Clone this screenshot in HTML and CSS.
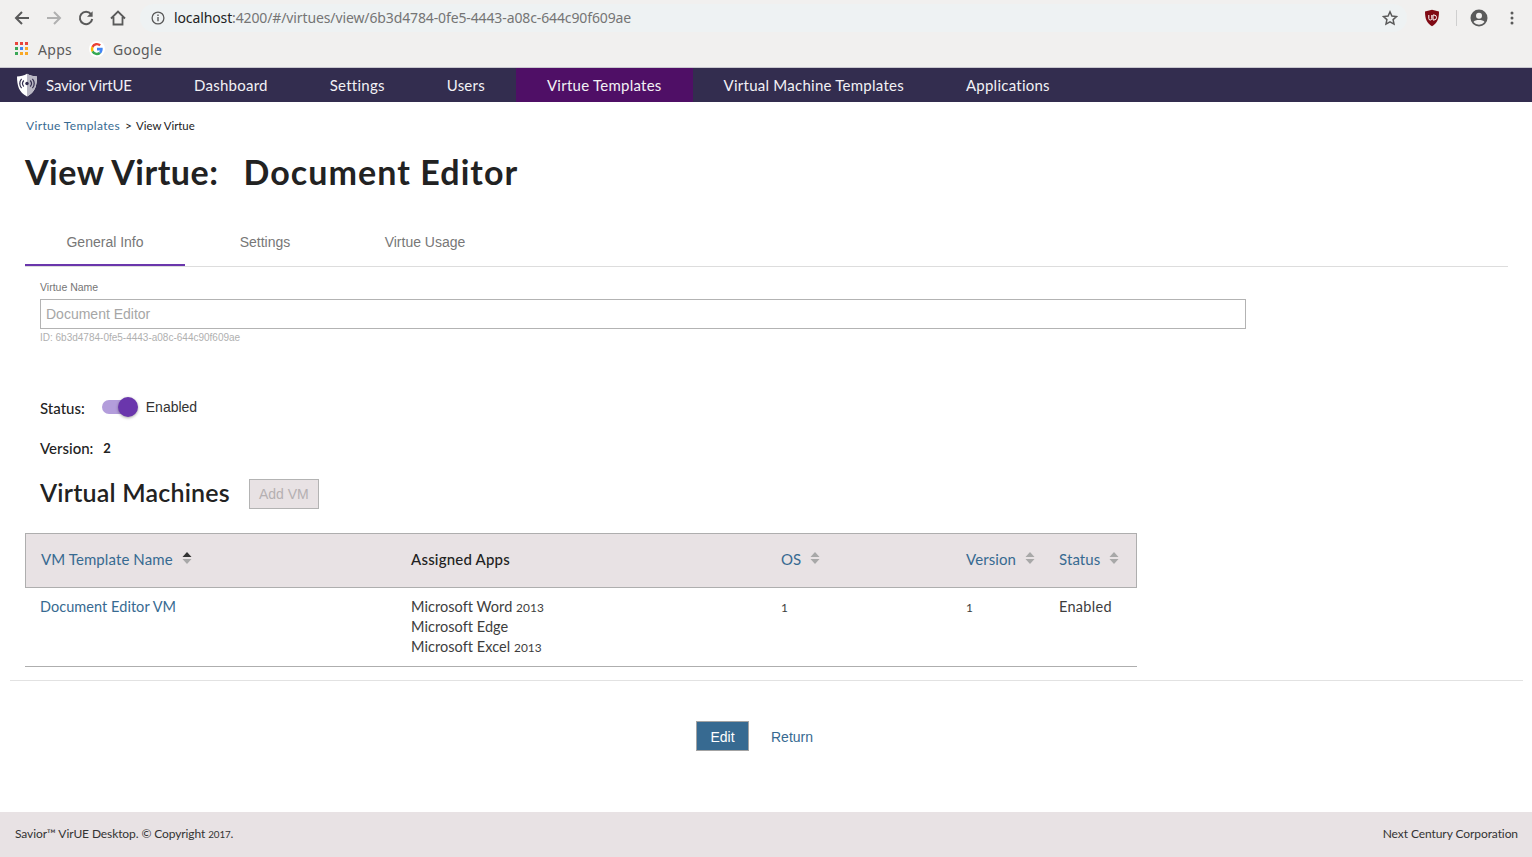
FILE: index.html
```html
<!DOCTYPE html>
<html lang="en">
<head>
<meta charset="utf-8">
<title>Savior VirtUE</title>
<link rel="stylesheet" href="styles.css">
</head>
<body>
<div class="browser">
  <div class="toolbar">
    <svg class="tb-icon" viewBox="0 0 16 16"><path d="M15 8H2.5M8 2 2 8l6 6" fill="none" stroke="#5a5a5a" stroke-width="2"/></svg>
    <svg class="tb-icon" viewBox="0 0 16 16"><path d="M1 8h12.5M8 2l6 6-6 6" fill="none" stroke="#b0b0b0" stroke-width="2"/></svg>
    <svg class="tb-icon" viewBox="0 0 16 16"><path d="M13 4.2A6.2 6.2 0 1 0 14.2 9" fill="none" stroke="#5a5a5a" stroke-width="2"/><path d="M14.6 1.2v5.6H9z" fill="#5a5a5a"/></svg>
    <svg class="tb-icon" viewBox="0 0 16 16"><path d="M1 8.5 8 1.5l7 7M3.5 7v7.5h9V7" fill="none" stroke="#5a5a5a" stroke-width="1.8"/></svg>
    <div class="omnibox">
      <svg class="info" viewBox="0 0 14 14"><circle cx="7" cy="7" r="5.9" fill="none" stroke="#5a5a5a" stroke-width="1.3"/><path d="M7 6v4.2M7 3.6v1.3" stroke="#5a5a5a" stroke-width="1.4"/></svg>
      <span class="url"><span class="host">localhost</span>:4200/#/virtues/view/6b3d4784-0fe5-4443-a08c-644c90f609ae</span>
      <svg class="star" viewBox="0 0 16 16"><path d="m8 1.8 1.9 4.2 4.6.5-3.4 3.1.9 4.5L8 11.8l-4 2.3.9-4.5L1.500 6.500l4.600-.5z" fill="none" stroke="#5a5a5a" stroke-width="1.500"/></svg>
    </div>
    <svg class="ublock" viewBox="0 0 16 18"><path d="M8 .8 15 2.500c0 7-1.500 11.500-7 14.700C2.500 14 1 9.500 1 2.500z" fill="#800a14"/><path d="M4.800 6v3.500a1.500 1.500 0 0 0 3 0V6M9 6v5h1a2.500 2.500 0 0 0 0-5z" fill="none" stroke="#fff" stroke-width="1"/></svg>
    <span class="tb-sep"></span>
    <svg class="avatar" viewBox="0 0 18 18"><circle cx="9" cy="9" r="8.500" fill="#5a5a5a"/><circle cx="9" cy="6.800" r="3" fill="#f1f0ef"/><path d="M3.500 13c1.500-2.600 9.500-2.600 11 0a7 7 0 0 1-11 0z" fill="#f1f0ef"/></svg>
    <svg class="kebab" viewBox="0 0 4 14"><circle cx="2" cy="2" r="1.500" fill="#5a5a5a"/><circle cx="2" cy="7" r="1.500" fill="#5a5a5a"/><circle cx="2" cy="12" r="1.500" fill="#5a5a5a"/></svg>
  </div>
  <div class="bookmarks">
    <span class="bm">
      <svg class="apps" viewBox="0 0 14 14"><g><rect x="0" y="0" width="3" height="3" fill="#e8453c"/><rect x="5" y="0" width="3" height="3" fill="#e8453c"/><rect x="10" y="0" width="3" height="3" fill="#e8453c"/><rect x="0" y="5" width="3" height="3" fill="#3aa757"/><rect x="5" y="5" width="3" height="3" fill="#4285f4"/><rect x="10" y="5" width="3" height="3" fill="#f9a825"/><rect x="0" y="10" width="3" height="3" fill="#3aa757"/><rect x="5" y="10" width="3" height="3" fill="#f9a825"/><rect x="10" y="10" width="3" height="3" fill="#f9a825"/></g></svg>
      Apps
    </span>
    <span class="bm">
      <svg class="g" viewBox="0 0 16 16"><circle cx="8" cy="8" r="8" fill="#fff"/><path d="M13.600 6.800H8v2.600h3a3 3 0 0 1-1.200 1.700l2 1.600c1.200-1.100 1.900-2.700 1.900-4.600z" fill="#4285f4"/><path d="M4.500 9.400 2.500 11A6 6 0 0 0 11.800 12.700L9.800 11.100a3.600 3.600 0 0 1-5.300-1.700z" fill="#34a853"/><path d="M4.500 9.400a3.600 3.600 0 0 1 0-2.600L2.500 5.200a6 6 0 0 0 0 5.800z" fill="#fbbc05"/><path d="M2.500 5.200 4.500 6.800A3.600 3.600 0 0 1 10.300 5.300l1.700-1.700A6 6 0 0 0 2.500 5.200z" fill="#ea4335"/></svg>
      Google
    </span>
  </div>
</div>

<nav class="nav">
  <a class="brand">
    <svg class="shield" viewBox="0 0 22 24"><path d="M11 .8C8 2.800 4.500 3.500 1 3.500c0 9 2 16 10 20 8-4 10-11 10-20-3.500 0-7-.7-10-2.700z" fill="#fff"/><path d="M11 .8v22.700c8-4 10-11 10-20-3.500 0-7-.7-10-2.700z" fill="#b9b7c4"/><circle cx="11" cy="10.500" r="1.700" fill="#332d4f"/><path d="M7.800 7.500a4.500 4.500 0 0 0 0 6M14.200 7.500a4.500 4.500 0 0 1 0 6M5.600 5.800a7 7 0 0 0 0 9.400M16.400 5.800a7 7 0 0 1 0 9.400" fill="none" stroke="#332d4f" stroke-width="1.200"/></svg>
    <span class="brand-name">Savior VirtUE</span>
  </a>
  <a class="nav-item">Dashboard</a>
  <a class="nav-item">Settings</a>
  <a class="nav-item">Users</a>
  <a class="nav-item active">Virtue Templates</a>
  <a class="nav-item">Virtual Machine Templates</a>
  <a class="nav-item">Applications</a>
</nav>

<main class="main">
  <div class="crumbs"><a class="link">Virtue Templates</a><span class="crumb-sep">&gt;</span><span class="crumb-cur">View Virtue</span></div>
  <h1 class="title"><span class="title-a">View Virtue:</span><span class="title-b">Document Editor</span></h1>

  <div class="tabs">
    <div class="tab selected">General Info</div>
    <div class="tab">Settings</div>
    <div class="tab">Virtue Usage</div>
  </div>

  <section class="panel">
    <label class="field-label">Virtue Name</label>
    <div class="input">Document Editor</div>
    <div class="hint">ID: 6b3d4784-0fe5-4443-a08c-644c90f609ae</div>

    <div class="status-row">
      <span class="key">Status:</span>
      <span class="toggle"><span class="track"></span><span class="thumb"></span></span>
      <span class="toggle-text">Enabled</span>
    </div>
    <div class="version-row"><span class="key">Version:</span><span class="version-val">2</span></div>
    <div class="vm-head">
      <h2 class="vm-title">Virtual Machines</h2>
      <button class="add-btn" disabled>Add VM</button>
    </div>
  </section>

  <div class="table">
    <div class="row head">
      <div class="cell c1 link">VM Template Name <svg class="sort" viewBox="0 0 10 12"><path d="M5 0l4.500 5H.5z" fill="#333"/><path d="M5 12 .5 7h9z" fill="#a8a8a8"/></svg></div>
      <div class="cell c2">Assigned Apps</div>
      <div class="cell c3 link">OS <svg class="sort" viewBox="0 0 10 12"><path d="M5 0l4.500 5H.5z" fill="#a8a8a8"/><path d="M5 12 .5 7h9z" fill="#a8a8a8"/></svg></div>
      <div class="cell c4 link">Version <svg class="sort" viewBox="0 0 10 12"><path d="M5 0l4.500 5H.5z" fill="#a8a8a8"/><path d="M5 12 .5 7h9z" fill="#a8a8a8"/></svg></div>
      <div class="cell c5 link">Status <svg class="sort" viewBox="0 0 10 12"><path d="M5 0l4.500 5H.5z" fill="#a8a8a8"/><path d="M5 12 .5 7h9z" fill="#a8a8a8"/></svg></div>
    </div>
    <div class="row body">
      <div class="cell c1 link">Document Editor VM</div>
      <div class="cell c2">Microsoft Word <span class="num">2013</span><br>Microsoft Edge<br>Microsoft Excel <span class="num">2013</span></div>
      <div class="cell c3"><span class="num">1</span></div>
      <div class="cell c4"><span class="num">1</span></div>
      <div class="cell c5">Enabled</div>
    </div>
  </div>

  <div class="actions">
    <button class="edit-btn">Edit</button>
    <a class="return">Return</a>
  </div>
</main>

<footer class="footer">
  <span class="foot-left">Savior™ VirUE Desktop. © Copyright <span class="num">2017</span>.</span>
  <span class="foot-right">Next Century Corporation</span>
</footer>
</body>
</html>
```

FILE: styles.css
```css
* { box-sizing: border-box; }
html, body { margin: 0; padding: 0; }
body {
  width: 1532px;
  height: 857px;
  overflow: hidden;
  display: flex;
  flex-direction: column;
  background: #fff;
  font-family: Lato, "Open Sans", sans-serif;
  color: #222;
}
.browser { height: 68px; background: #f1f0ef; flex: none; border-bottom: 1px solid #c9c8cf; }
.toolbar { height: 36px; display: flex; align-items: center; padding-left: 14px; }
.tb-icon { width: 16px; height: 16px; margin-right: 16px; flex: none; }
.omnibox {
  width: 1267px;
  height: 28px;
  margin-left: -2px;
  background: #eef2f3;
  border-radius: 14px;
  display: flex;
  align-items: center;
  padding-left: 11px;
  font-family: "Noto Sans", sans-serif;
  font-size: 14px;
  letter-spacing: -.12px;
  color: #757575;
}
.info { width: 14px; height: 14px; margin-right: 9px; }
.url { flex: 1; margin-bottom: 2px; }
.host { color: #222; }
.star { width: 16px; height: 16px; margin-right: 9px; }
.ublock { width: 16px; height: 18px; margin-left: 17px; flex: none; }
.tb-sep { width: 1px; height: 16px; background: #cfcfcf; margin-left: 16px; }
.avatar { width: 18px; height: 18px; margin-left: 13px; flex: none; }
.kebab { width: 4px; height: 14px; margin-left: 22px; flex: none; }
.bookmarks {
  height: 31px;
  display: flex;
  align-items: center;
  padding-left: 15px;
  padding-bottom: 5px;
  gap: 17px;
  font-family: "Noto Sans", sans-serif;
  font-size: 14px;
  letter-spacing: .3px;
  color: #5a5a5a;
}
.bm { display: flex; align-items: center; gap: 8px; }
.apps { width: 14px; height: 14px; margin-right: 1px; }
.g { width: 16px; height: 16px; }

.nav {
  height: 34px;
  flex: none;
  background: #332d4f;
  display: flex;
  align-items: stretch;
  font-size: 15px;
  letter-spacing: .25px;
  color: #f2f1f5;
}
.nav a { display: flex; align-items: center; }
.brand { padding-left: 16px; width: 163px; gap: 8px; }
.brand-name { letter-spacing: -.15px; }
.shield { width: 22px; height: 24px; }
.nav-item { padding: 0 31px; }
.nav-item.active { background: #4f0f66; }

.main { flex: 1; min-height: 0; padding: 0 24px 0 25px; }
.link { color: #376a91; }
.crumbs { font-size: 12px; padding: 16px 0 0 1px; line-height: 15px; display: flex; }
.crumbs .link { letter-spacing: .35px; }
.crumb-sep { margin: 0 4px 0 5px; }
.crumb-cur { font-size: 11.400px; }
.title { margin: 16px 0 0; font-size: 34px; font-weight: 700; line-height: 46px; height: 46px; display: flex; gap: 25px; color: #222; }
.title-a { letter-spacing: .5px; }
.title-b { letter-spacing: 1.07px; }
.tabs { margin-top: 24px; display: flex; height: 48px; border-bottom: 1px solid #ddd; font-family: "Liberation Sans", sans-serif; font-size: 14px; color: #777; }
.tab { width: 160px; text-align: center; line-height: 46px; }
.tab.selected { border-bottom: 2px solid #6a36ac; height: 47px; }
.panel { padding: 14px 0 0 15px; }
.field-label { display: block; font-family: "Liberation Sans", sans-serif; font-size: 10.500px; line-height: 13px; color: #757575; }
.input {
  width: 1206px;
  height: 30px;
  margin-top: 5px;
  border: 1px solid #b3b3b3;
  padding-left: 5px;
  font-family: "Liberation Sans", sans-serif;
  font-size: 14px;
  line-height: 28px;
  color: #a6a6a6;
}
.hint { margin-top: 3px; font-family: "Liberation Sans", sans-serif; font-size: 10px; line-height: 12px; color: #b0b0b0; }
.status-row { margin-top: 52px; display: flex; align-items: center; height: 24px; }
.key { font-size: 15px; color: #222; font-weight: 500; }
.toggle { position: relative; width: 36px; height: 20px; margin: -2px 0 0 17px; }
.track { position: absolute; left: 0; top: 3px; width: 34px; height: 14px; border-radius: 7px; background: #b39ddb; }
.thumb { position: absolute; left: 16px; top: 0; width: 20px; height: 20px; border-radius: 50%; background: #6a36ac; box-shadow: 0 1px 3px rgba(0,0,0,.35); }
.toggle-text { margin: -2px 0 0 8px; font-family: "Liberation Sans", sans-serif; font-size: 14px; color: #333; }
.version-row { margin-top: 18px; display: flex; height: 20px; align-items: center; }
.version-val { margin-left: 10px; font-size: 13px; font-weight: 700; }
.vm-head { margin-top: 14px; display: flex; align-items: center; gap: 19px; height: 40px; }
.vm-title { margin: 0; font-size: 25px; font-weight: 600; letter-spacing: .2px; color: #222; }
.add-btn { width: 70px; height: 30px; margin-top: 4px; background: #e8e2e4; border: 1px solid #b3b3b3; font-family: "Liberation Sans", sans-serif; font-size: 14px; color: #b5b0b2; padding: 0; }

.table { width: 1112px; margin-top: 21px; font-size: 15px; }
.row { display: grid; grid-template-columns: 370px 370px 185px 93px 1fr; }
.row.head { height: 55px; padding-bottom: 4px; background: #e8e2e4; border: 1px solid #aeaeae; align-items: center; letter-spacing: .1px; }
.row.head .c2 { font-weight: 500; color: #222; letter-spacing: .2px; }
.row.head .cell { padding-left: 15px; }
.row.body { height: 79px; border-bottom: 1px solid #aeaeae; line-height: 20px; padding-top: 9px; color: #3d3d3d; font-size: 14.500px; letter-spacing: .05px; }
.row.body .cell { padding-left: 16px; }
.row.body .c1 { padding-left: 15px; }
.row.body .c5 { letter-spacing: .3px; }
.num { font-size: .82em; line-height: 1; }
.sort { width: 10px; height: 12px; margin-left: 5px; position: relative; top: -1px; }
.actions {
  margin: 13px -15px 0 -15px;
  border-top: 1px solid #e2e2e2;
  padding: 40px 0 0 686px;
  display: flex;
  align-items: center;
}
.edit-btn { width: 53px; height: 30px; padding: 2px 0 0; background: #376a91; border: 1px solid #a3a3a3; color: #fff; font-family: "Liberation Sans", sans-serif; font-size: 14px; }
.return { margin: 2px 0 0 22px; font-family: "Liberation Sans", sans-serif; font-size: 14px; color: #376a91; }
.footer {
  height: 45px;
  flex: none;
  background: #e8e2e4;
  display: flex;
  justify-content: space-between;
  align-items: center;
  padding: 0 14px 2px 15px;
  font-size: 12px;
  color: #333;
}
.foot-left { letter-spacing: -.1px; }
.foot-right { letter-spacing: -.08px; }
```
